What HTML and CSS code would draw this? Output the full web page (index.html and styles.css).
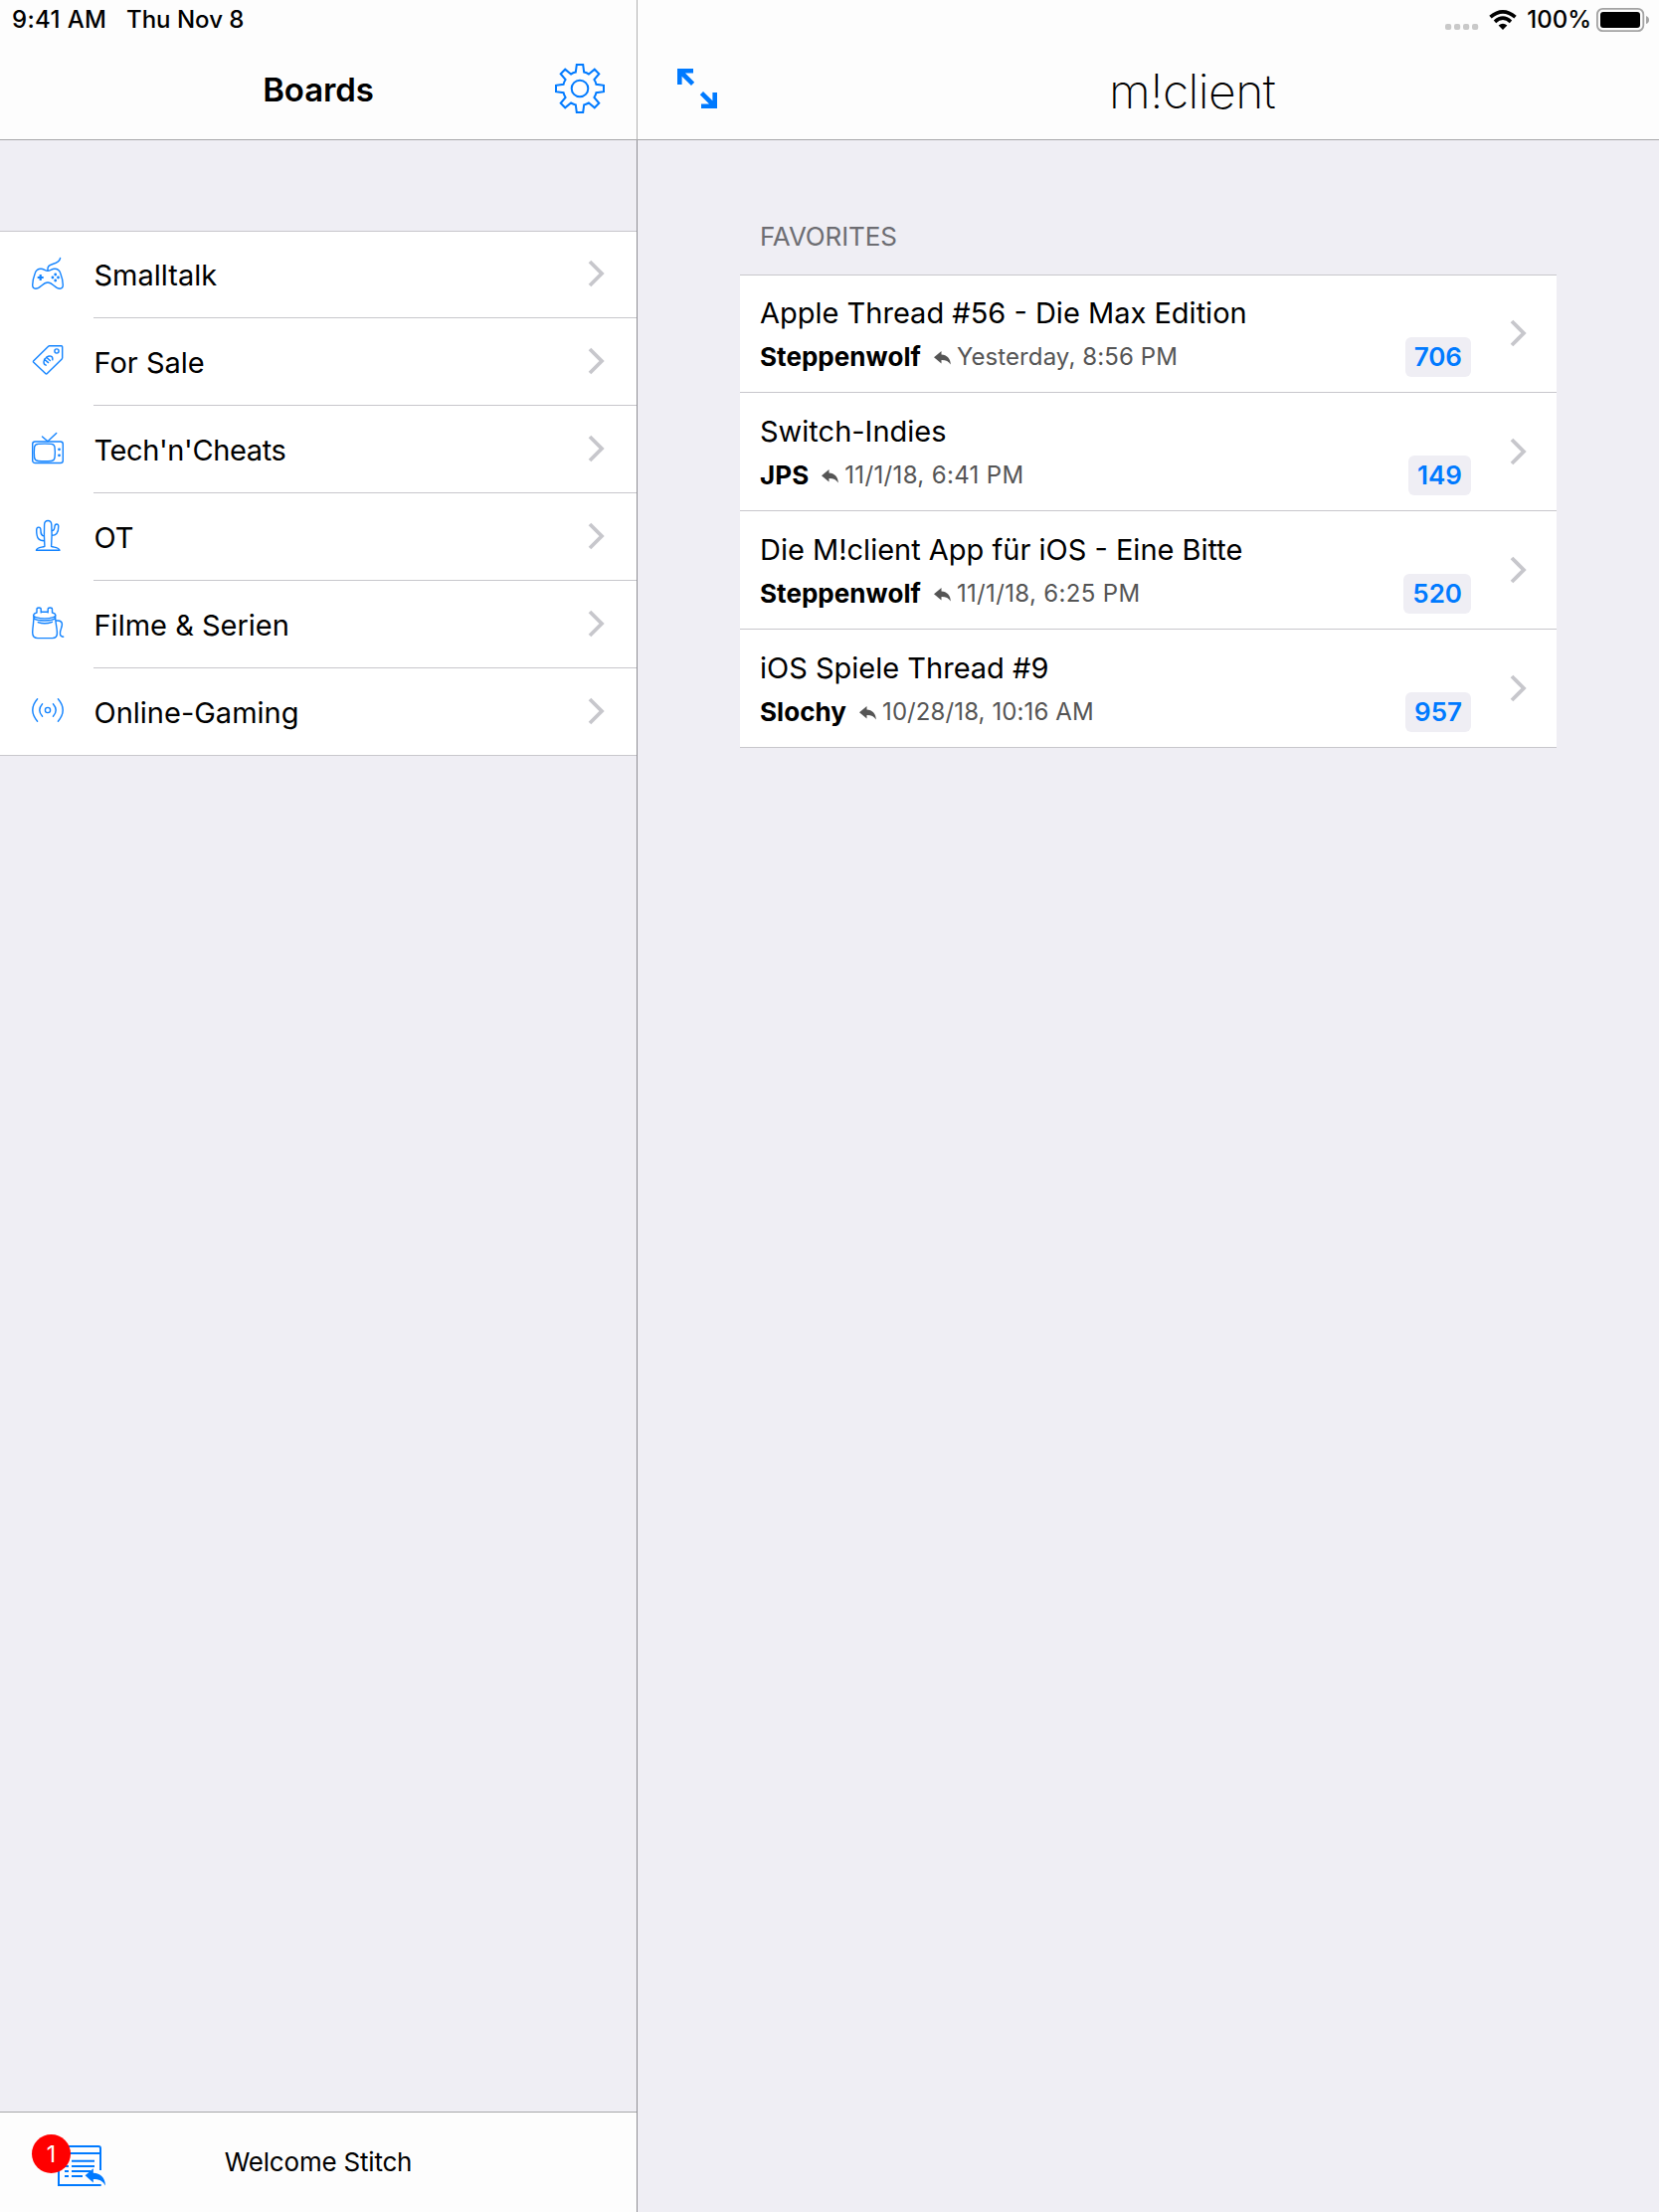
FILE: index.html
```html
<!DOCTYPE html>
<html lang="en">
<head>
<meta charset="utf-8">
<title>m!client</title>
<link rel="stylesheet" href="styles.css">
</head>
<body>
<svg class="symbols" width="0" height="0" aria-hidden="true">
  <symbol id="chevron" viewBox="0 0 17 28"><path d="M2 2 L14 14 L2 26" fill="none" stroke="#c7c7cc" stroke-width="3.8"/></symbol>
  <symbol id="reply" viewBox="0 0 17 14"><path d="M0 6.3 L7.5 0 V3.6 C13 3.8 16.6 7.5 16.8 13.4 C14.6 10 12 8.8 7.5 8.9 V12.4 Z" fill="#555"/></symbol>
</svg>
<div class="app">
  <aside class="sidebar">
    <header class="bar">
      <div class="status"><span class="time">9:41 AM</span><span>Thu Nov 8</span></div>
      <div class="nav">
        <h1 class="nav-title">Boards</h1>
        <svg class="gear" viewBox="-26 -26 52 52" fill="none" stroke="#007aff" stroke-width="2">
          <path d="M-4.2 -16.4 L-3.2 -24 H3.2 L4.2 -16.4 Q7 -15.8 9 -14.4 L14.8 -19.3 L19.3 -14.8 L14.4 -9 Q15.8 -7 16.4 -4.2 L24 -3.2 V3.2 L16.4 4.2 Q15.8 7 14.4 9 L19.3 14.8 L14.8 19.3 L9 14.4 Q7 15.8 4.2 16.4 L3.2 24 H-3.2 L-4.2 16.4 Q-7 15.8 -9 14.4 L-14.8 19.3 L-19.3 14.8 L-14.4 9 Q-15.8 7 -16.4 4.2 L-24 3.2 V-3.2 L-16.4 -4.2 Q-15.8 -7 -14.4 -9 L-19.3 -14.8 L-14.8 -19.3 L-9 -14.4 Q-7 -15.8 -4.2 -16.4 Z"/>
          <circle r="8.3"/>
        </svg>
      </div>
    </header>
    <main class="sidebar-body">
      <ul class="boards">
        <li class="board">
          <svg class="icon" viewBox="0 0 32 32"><path d="M16 13.3 C13 13.3 12.5 11.3 9 11.3 C6 11.3 4.3 12.5 3.3 15.5 C2 19 .7 24 .7 27.5 C.7 30 1.8 31.2 3.8 31.2 C8.5 31.2 11 25 16 25 C21 25 23.5 31.2 28.2 31.2 C30.2 31.2 31.3 30 31.3 27.5 C31.3 24 30 19 28.7 15.5 C27.7 12.5 26 11.3 23 11.3 C19.5 11.3 19 13.3 16 13.3 V11 C16 8.5 17.5 7.5 21 6.5 C25 5.3 28.2 3 28.6 .4"/><path class="thick" d="M8.7 17 V23 M5.7 20 H11.7"/><g class="dots"><circle cx="23.7" cy="17" r="1.4"/><circle cx="23.7" cy="23" r="1.4"/><circle cx="20.9" cy="20" r="1.4"/><circle cx="26.5" cy="20" r="1.4"/></g></svg>
          <div class="board-row"><span>Smalltalk</span><svg class="chevron"><use href="#chevron"/></svg></div>
        </li>
        <li class="board">
          <svg class="icon" viewBox="0 0 32 32"><path d="M17.6 .7 H29.7 Q30.7 .7 30.7 1.7 V12.8 Q30.7 13.4 30.2 13.9 L15.4 28.6 Q14.5 29.5 13.7 28.6 L1.8 17.3 Q1 16.5 1.8 15.7 L16.6 1.2 Q17 .7 17.6 .7 Z"/><circle cx="25" cy="6" r="2.1"/><path d="M20.8 14.8 C21.5 10.5 17.5 10.2 15 12 C11.5 14.5 10.8 19 14.2 20.2 M12.6 14.2 L16.6 17.6 M14.6 12.2 L18.4 15.6"/></svg>
          <div class="board-row"><span>For Sale</span><svg class="chevron"><use href="#chevron"/></svg></div>
        </li>
        <li class="board">
          <svg class="icon" viewBox="0 0 32 32"><rect x=".7" y="9" width="30.6" height="21.5" rx="2.6"/><path d="M6.5 11.4 Q13 10.8 19.5 11.4 Q22.6 11.7 23 14.5 Q23.7 20 23 25.2 Q22.6 28.2 19.5 28.5 Q13 29 6.5 28.5 Q3 28.2 2.6 25.2 Q2 20 2.6 14.5 Q3 11.7 6.5 11.4 Z M10.5 4 L16 8.8 L24.7 .6"/><g class="dots"><circle cx="27.5" cy="16.8" r="1.4"/><circle cx="27.5" cy="22.8" r="1.4"/></g></svg>
          <div class="board-row"><span class="tight">Tech'n'Cheats</span><svg class="chevron"><use href="#chevron"/></svg></div>
        </li>
        <li class="board">
          <svg class="icon" viewBox="0 0 32 32"><path d="M12.9 26.3 C12.3 18 12.3 10 12.6 4.5 C12.9 -.8 19.4 -.8 19.8 4.5 C20.2 10 20.2 18 19.6 26.3 C22 27.5 27 27 28 30.3 H4.4 C5 27 10.5 27.5 12.9 26.3 Z M12.3 20.7 C7 20.5 4.7 18.5 4.7 10 C4.7 6.3 8.7 6.3 8.9 9.5 C9 13.5 9.3 15.8 12.3 16 M20.1 15.4 C24.5 15.4 26.8 12.5 26.8 6.3 C26.8 3.2 23.2 3.4 23 6.3 C22.9 9 22.5 10.5 20.1 10.9"/></svg>
          <div class="board-row"><span>OT</span><svg class="chevron"><use href="#chevron"/></svg></div>
        </li>
        <li class="board">
          <svg class="icon" viewBox="0 0 32 32"><path d="M4.8 5 C1 6 .5 8.6 4 9.6 C9 11 17 11 21.5 9.6 C25 8.6 24.6 6 20.8 5 M9.2 4.3 H16.2 M1.8 7.4 C2.6 13 .7 18 .7 25 C.7 29 2.5 30.6 6 30.6 H20.5 C24 30.6 25.6 29 25.4 25 C25.2 18 23 13 23.8 7.4 M2 10.6 C5 13.8 20.5 13.8 23.6 10.6 M6.2 14.6 C10 16 16 16 20.5 14.3 M5 5 V1.5 C5 -.6 9.2 -.6 9.2 1.5 V4.9 M16.2 4.9 V1.5 C16.2 -.6 20.5 -.6 20.5 1.5 V5 M23.8 12.7 C30.5 12.5 31.5 15.5 29.6 20.5 C27.5 26 28 29 31.7 29.2"/></svg>
          <div class="board-row"><span>Filme &amp; Serien</span><svg class="chevron"><use href="#chevron"/></svg></div>
        </li>
        <li class="board">
          <svg class="icon" viewBox="0 0 32 32"><circle cx="16" cy="15" r="2.6"/><path d="M10.6 8.7 Q5 15 10.6 21.3 M21.4 8.7 Q27 15 21.4 21.3 M5.6 3.8 Q-4 15 5.6 26.2 M26.4 3.8 Q36 15 26.4 26.2"/></svg>
          <div class="board-row"><span>Online-Gaming</span><svg class="chevron"><use href="#chevron"/></svg></div>
        </li>
      </ul>
    </main>
    <footer class="toolbar">
      <div class="inbox">
        <svg class="inbox-icon" viewBox="0 0 50 42" fill="none" stroke="#007aff" stroke-width="2">
          <path d="M44 26 V4 Q44 2 42 2 H4 Q2 2 2 4 V41 H44.7 M2 9 H44"/>
          <path d="M15 16.7 H38 M8 22 H12 M15 22 H38 M8 27 H12 M15 27 H34 M8 32 H12 M15 32 H26"/>
          <path stroke="none" fill="#007aff" d="M28.6 31.3 L36.8 24.2 V28.8 C44 29 48.8 33.5 49 41.6 C46 36.3 42.5 35 36.8 35 V38.6 Z"/>
        </svg>
        <span class="count">1</span>
      </div>
      <span class="welcome">Welcome Stitch</span>
    </footer>
  </aside>
  <section class="detail">
    <header class="bar">
      <div class="status status-right">
        <svg width="34" height="40" viewBox="0 0 34 40" fill="#c9c9c9"><rect y="24" width="6.2" height="6" rx="2"/><rect x="9" y="24" width="6.2" height="6" rx="2"/><rect x="18" y="24" width="6.2" height="6" rx="2"/><rect x="27" y="24" width="6.2" height="6" rx="2"/></svg>
        <svg class="wifi" width="28" height="40" viewBox="0 0 28 40" fill="none" stroke="#000" stroke-width="3.6"><path d="M1.5 17.2 Q14 6.4 26.5 17.2"/><path d="M6 21.8 Q14 14.6 22 21.8"/><path stroke="none" fill="#000" d="M14 30 L9.6 25.6 Q14 21.8 18.4 25.6 Z"/></svg>
        <span class="percent">100%</span>
        <svg class="battery" width="54" height="40" viewBox="0 0 54 40"><rect x=".9" y="8.9" width="46.4" height="22.2" rx="5.5" fill="none" stroke="#a3a3a3" stroke-width="1.8"/><rect x="4" y="12" width="40" height="16" rx="3"/><path d="M50 16 Q53 17 53 20 Q53 23 50 24 Z" fill="#a3a3a3"/></svg>
      </div>
      <div class="nav nav-detail">
        <svg class="expand" viewBox="0 0 40 40"><path fill="#007aff" d="M0 0 H16 V4.6 H8 L17.2 13.8 L14 17 L4.6 7.8 V16 H0 Z M40 40 H24 V35.4 H32 L22.8 26.2 L26 23 L35.4 32.2 V24 H40 Z"/></svg>
        <div class="brand">m!client</div>
      </div>
    </header>
    <main class="favorites">
      <h2 class="section-title">FAVORITES</h2>
      <ul class="threads">
        <li class="thread">
          <div class="info"><div class="title">Apple Thread #56 - Die Max Edition</div>
          <div class="meta"><b>Steppenwolf</b><svg class="reply"><use href="#reply"/></svg><span>Yesterday, 8:56 PM</span></div></div>
          <span class="badge">706</span><svg class="chevron"><use href="#chevron"/></svg>
        </li>
        <li class="thread">
          <div class="info"><div class="title">Switch-Indies</div>
          <div class="meta"><b>JPS</b><svg class="reply"><use href="#reply"/></svg><span class="numeric">11/1/18, 6:41 PM</span></div></div>
          <span class="badge">149</span><svg class="chevron"><use href="#chevron"/></svg>
        </li>
        <li class="thread">
          <div class="info"><div class="title">Die M!client App für iOS - Eine Bitte</div>
          <div class="meta"><b>Steppenwolf</b><svg class="reply"><use href="#reply"/></svg><span class="numeric">11/1/18, 6:25 PM</span></div></div>
          <span class="badge">520</span><svg class="chevron"><use href="#chevron"/></svg>
        </li>
        <li class="thread">
          <div class="info"><div class="title">iOS Spiele Thread #9</div>
          <div class="meta"><b>Slochy</b><svg class="reply"><use href="#reply"/></svg><span>10/28/18, 10:16 AM</span></div></div>
          <span class="badge">957</span><svg class="chevron"><use href="#chevron"/></svg>
        </li>
      </ul>
    </main>
  </section>
</div>
</body>
</html>
```
FILE: styles.css
```css
* { box-sizing: border-box; margin: 0; padding: 0; }
body { font-family: Inter, "Liberation Sans", sans-serif; color: #000; background: #efeef4; }
ul { list-style: none; }
svg { display: block; flex: none; }
.symbols { position: absolute; }

.app { display: grid; grid-template-columns: 641px 1fr; height: 2224px; }
.sidebar { display: flex; flex-direction: column; border-right: 1px solid #8e8e93; }
.sidebar-body { flex: 1; padding-top: 91px; }

.bar { height: 141px; background: #fdfdfd; border-bottom: 1px solid #a7a7aa; }
.sidebar .bar { width: 641px; border-right: 1px solid #b2b2b2; }
.status { display: flex; height: 40px; padding-left: 12px; font-size: 24px; font-weight: 500; line-height: 40px; white-space: nowrap; }
.time { width: 115px; letter-spacing: 0.35px; }
.status-right { padding: 0 9px 0 0; justify-content: flex-end; }
.wifi { margin-left: 10px; }
.percent { margin: 0 5px 0 10px; }

.nav { display: grid; grid-template-columns: 83px 1fr 83px; align-items: center; height: 100px; }
.nav-title { grid-column: 2; text-align: center; font-size: 33px; font-weight: 600; letter-spacing: -0.1px; line-height: 40px; }
.gear { width: 52px; height: 52px; margin-bottom: 2px; }
.nav-detail { display: flex; padding-left: 40px; }
.expand { width: 40px; height: 40px; margin-bottom: 2px; }
.brand { margin: 3px 0 0 394px; font-size: 48px; font-weight: 160; letter-spacing: -0.55px; line-height: 58px; }

.boards { background: #fff; box-shadow: inset 0 1px 0 #c8c7cc; }
.board { display: flex; align-items: center; height: 88px; padding-left: 32px; }
.board:last-child { border-bottom: 1px solid #c8c7cc; }
.board:last-child .board-row { border-bottom: 0; }
.icon { width: 32px; height: 32px; margin: 0 30px 2px 0; overflow: visible; fill: none; stroke: #1484ff; stroke-width: 1.4; stroke-linecap: round; stroke-linejoin: round; }
.icon .thick { stroke-width: 2.2; stroke-linecap: butt; }
.icon .dots { fill: #1484ff; stroke: none; }
.board-row { display: flex; flex: 1; align-items: center; justify-content: space-between; height: 88px; padding-right: 32px; border-bottom: 1px solid #c8c7cc; font-size: 29px; line-height: 36px; }
.board:last-child .board-row { height: 87px; }
.board-row span { margin: 2px 0 0 0.5px; }
.board-row .tight { letter-spacing: -0.38px; }
.chevron { width: 17px; height: 28px; }
.board-row .chevron { margin-bottom: 2px; }

.toolbar { display: grid; grid-template-columns: 120px 1fr 120px; align-items: center; height: 101px; background: #fdfdfd; border-top: 1px solid #a7a7aa; }
.inbox { position: relative; width: 50px; height: 42px; margin: 6px 0 0 57px; }
.inbox-icon { width: 50px; height: 42px; }
.count { position: absolute; left: -25px; top: -10px; width: 39px; height: 39px; border-radius: 50%; background: #f00; color: #fff; font-size: 23px; line-height: 40px; text-align: center; }
.welcome { text-align: center; font-size: 26px; letter-spacing: -0.2px; line-height: 32px; }

.favorites { padding: 81px 103px 0; }
.section-title { height: 54px; padding-left: 20px; color: #6d6d72; font-size: 26px; font-weight: 400; letter-spacing: -0.12px; line-height: 32px; }
.threads { background: #fff; box-shadow: inset 0 1px 0 #c8c7cc; }
.thread { display: flex; align-items: flex-end; height: 119px; padding: 0 30px 15px 20px; border-bottom: 1px solid #c8c7cc; }
.info { flex: 1; }
.title { font-size: 29px; line-height: 40px; }
.meta { display: flex; align-items: center; margin-top: 3px; color: #555; font-size: 24px; line-height: 40px; }
.meta b { color: #000; font-size: 26px; letter-spacing: 0.05px; }
.meta span { margin-top: 1px; letter-spacing: 0.1px; }
.meta .numeric { letter-spacing: 0.35px; }
.reply { width: 17px; height: 14px; margin: 3px 6px 0 13px; }
.badge { height: 40px; padding: 0 9px; margin-right: 39px; border-radius: 6px; background: #efeef4; color: #007aff; font-size: 26px; font-weight: 600; line-height: 40px; }
.thread .chevron { margin-bottom: 30px; }
```
